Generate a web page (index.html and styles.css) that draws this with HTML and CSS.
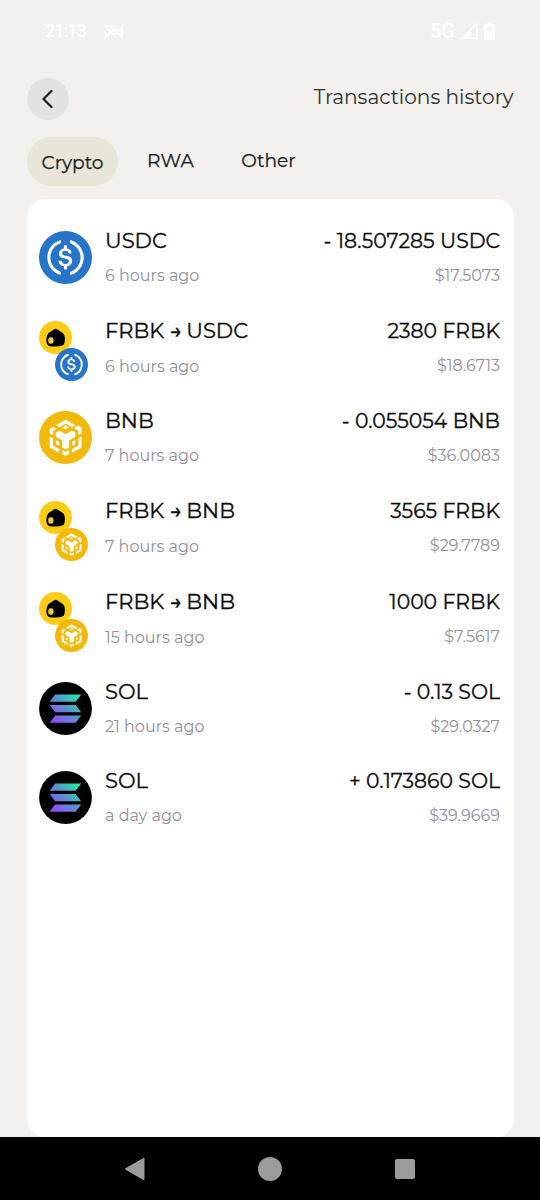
FILE: index.html
```html
<!DOCTYPE html>
<html lang="en">
<head>
<meta charset="utf-8">
<title>Transactions history</title>
<link rel="stylesheet" href="styles.css">
</head>
<body>
<svg width="0" height="0" class="defs" aria-hidden="true">
  <defs>
    <linearGradient id="sol-grad" gradientUnits="userSpaceOnUse" x1="13" y1="40" x2="40" y2="12">
      <stop offset="0" stop-color="#9945ff"/><stop offset=".5" stop-color="#5a8fd0"/><stop offset="1" stop-color="#19f5a0"/>
    </linearGradient>
    <symbol id="usdc" viewBox="0 0 32 32">
      <circle cx="16" cy="16" r="16" fill="#2775ca"/>
      <path fill="#fff" d="M20.022 18.124c0-2.124-1.28-2.852-3.84-3.156-1.828-.243-2.193-.728-2.193-1.578 0-.85.61-1.396 1.828-1.396 1.097 0 1.707.364 2.011 1.275a.458.458 0 00.427.303h.975a.416.416 0 00.427-.425v-.06a3.04 3.04 0 00-2.743-2.489V9.142c0-.243-.183-.425-.487-.486h-.915c-.243 0-.426.182-.487.486v1.396c-1.829.242-2.986 1.456-2.986 2.974 0 2.002 1.218 2.791 3.778 3.095 1.707.303 2.255.668 2.255 1.639 0 .97-.853 1.638-2.011 1.638-1.585 0-2.133-.667-2.316-1.578-.06-.242-.244-.364-.427-.364h-1.036a.416.416 0 00-.426.425v.06c.243 1.518 1.219 2.61 3.23 2.914v1.457c0 .242.183.425.487.485h.915c.243 0 .426-.182.487-.485V21.34c1.829-.303 3.047-1.578 3.047-3.217z"/>
      <path fill="#fff" d="M12.892 24.497c-4.754-1.7-7.192-6.98-5.424-11.653.914-2.55 2.925-4.491 5.424-5.402.244-.121.365-.303.365-.607v-.85c0-.242-.121-.424-.365-.485-.061 0-.183 0-.244.06a10.895 10.895 0 00-7.13 13.717c1.096 3.4 3.717 6.01 7.13 7.102.244.121.488 0 .548-.243.061-.06.061-.122.061-.243v-.85c0-.182-.182-.424-.365-.546zm6.46-18.936c-.244-.122-.488 0-.548.242-.061.061-.061.122-.061.243v.85c0 .243.182.485.365.607 4.754 1.7 7.192 6.98 5.424 11.653-.914 2.55-2.925 4.491-5.424 5.402-.244.121-.365.303-.365.607v.85c0 .242.121.424.365.485.061 0 .183 0 .244-.06a10.895 10.895 0 007.13-13.717c-1.096-3.46-3.778-6.07-7.13-7.162z"/>
    </symbol>
    <symbol id="bnb" viewBox="0 0 34 34">
      <circle cx="17" cy="17" r="17" fill="#f0b90b"/>
      <path fill="#fff" stroke="#f0b90b" stroke-width=".25" transform="translate(5.100 5.500)" d="M5.631 3.676 12.001 0l6.367 3.676-2.34 1.358L12 2.716 7.972 5.034l-2.34-1.358Zm12.737 4.636-2.34-1.358L12 9.272 7.972 6.954l-2.34 1.358v2.716l4.026 2.318v4.636L12 19.341l2.341-1.359v-4.636l4.027-2.318V8.312Zm0 7.352v-2.716l-2.34 1.358v2.716l2.34-1.358Zm1.663.96-4.027 2.318v2.717l6.368-3.677V10.63l-2.34 1.358v4.636Zm-2.34-10.63 2.34 1.358v2.716l2.341-1.358V5.034l-2.34-1.358-2.342 1.358Zm-8.034 13.4v2.716L12 23.468l2.341-1.358v-2.716L12 20.752l-2.343-1.358Zm-4.026-3.73 2.34 1.358v-2.716l-2.34-1.358v2.716Zm4.026-10.63L12 6.392l2.341-1.358L12 3.676 9.657 5.034Zm-5.689 2.32 2.34-1.36-2.34-1.358-2.34 1.358v2.716l2.34 1.358V7.354Zm0 4.636-2.34-1.358v7.353l6.366 3.677v-2.717l-4.026-2.318V11.99Z"/>
    </symbol>
    <symbol id="sol" viewBox="0 0 53 53">
      <circle cx="26.5" cy="26.5" r="26.4" fill="#000"/>
      <path fill="url(#sol-grad)" d="M16.200 12.500h26l-5.600 7.200h-26zM10.600 23h26l5.600 7.200h-26zM16.200 33.500h26l-5.600 7.200h-26z"/>
    </symbol>
    <symbol id="frbk" viewBox="0 0 33 33">
      <circle cx="16.500" cy="16.500" r="16.500" fill="#facc15"/>
      <path d="M15.300 8.200Q16.700 7.400 18 8.300L23.800 12.100Q25.800 13.600 25.900 17 26 22 24.500 24 20 26.200 11 25.300 7.600 24.500 7.300 19.500 7.200 14.500 9.500 12Z"/>
      <rect x="9.300" y="16.200" width="5.200" height="6.600" rx="2.300" fill="#e8d04a"/>
    </symbol>
  </defs>
</svg>

<div class="screen">
  <header class="status">
    <div class="status-group"><span class="clock">21:13</span>
      <svg class="notif" width="21" height="15" viewBox="0 0 21 15" fill="none" stroke="#fff" stroke-width="2.200"><path d="M2 2l9 9 8-8v10l-8-8-8 8V8M2 2h5l3 3"/></svg>
    </div>
    <div class="status-group right"><span>5G</span>
      <svg width="17" height="16" viewBox="0 0 17 16"><path d="M1 15L16 1v14z" fill="none" stroke="#fff" stroke-width="1.500"/><path d="M1 15l9-8.500V15z" fill="#fff"/></svg>
      <svg class="battery" width="11" height="18" viewBox="0 0 11 18"><path d="M3.500 0h4v2H11v16H0V2h3.500z" fill="#fff"/><path d="M3 5h5v4H3z" fill="#f3f0ed"/></svg>
    </div>
  </header>

  <div class="topbar">
    <button class="back" aria-label="Back"><svg width="12" height="20" viewBox="0 0 12 20"><path d="M9.500 2L1.500 10l8 8" fill="none" stroke="#17201f" stroke-width="2.200" stroke-linecap="round" stroke-linejoin="round"/></svg></button>
    <h1>Transactions history</h1>
  </div>

  <nav class="tabs">
    <a class="tab active">Crypto</a><a class="tab rwa">RWA</a><a class="tab other">Other</a>
  </nav>

  <main class="card">
    <div class="row">
      <div class="coin"><svg><use href="#usdc"/></svg></div>
      <div class="info"><div class="name">USDC</div><div class="time">6 hours ago</div></div>
      <div class="amount"><div class="name">- 18.507285 USDC</div><div class="fiat">$17.5073</div></div>
    </div>
    <div class="row">
      <div class="pair"><svg><use href="#frbk"/></svg><svg><use href="#usdc"/></svg></div>
      <div class="info swap"><div class="name">FRBK <span class="arrow">→</span> USDC</div><div class="time">6 hours ago</div></div>
      <div class="amount"><div class="name">2380 FRBK</div><div class="fiat">$18.6713</div></div>
    </div>
    <div class="row">
      <div class="coin"><svg><use href="#bnb"/></svg></div>
      <div class="info"><div class="name">BNB</div><div class="time">7 hours ago</div></div>
      <div class="amount"><div class="name">- 0.055054 BNB</div><div class="fiat">$36.0083</div></div>
    </div>
    <div class="row tall">
      <div class="pair"><svg><use href="#frbk"/></svg><svg><use href="#bnb"/></svg></div>
      <div class="info swap"><div class="name">FRBK <span class="arrow">→</span> BNB</div><div class="time">7 hours ago</div></div>
      <div class="amount"><div class="name">3565 FRBK</div><div class="fiat">$29.7789</div></div>
    </div>
    <div class="row">
      <div class="pair"><svg><use href="#frbk"/></svg><svg><use href="#bnb"/></svg></div>
      <div class="info swap"><div class="name">FRBK <span class="arrow">→</span> BNB</div><div class="time">15 hours ago</div></div>
      <div class="amount"><div class="name">1000 FRBK</div><div class="fiat">$7.5617</div></div>
    </div>
    <div class="row short">
      <div class="coin"><svg><use href="#sol"/></svg></div>
      <div class="info"><div class="name">SOL</div><div class="time">21 hours ago</div></div>
      <div class="amount"><div class="name">- 0.13 SOL</div><div class="fiat">$29.0327</div></div>
    </div>
    <div class="row">
      <div class="coin"><svg><use href="#sol"/></svg></div>
      <div class="info"><div class="name">SOL</div><div class="time">a day ago</div></div>
      <div class="amount"><div class="name">+ 0.173860 SOL</div><div class="fiat">$39.9669</div></div>
    </div>
  </main>

  <footer class="navbar">
    <svg width="22" height="24" viewBox="0 0 22 24"><path d="M2 12L19.500 2v20z" fill="#9b9b9b" stroke="#9b9b9b" stroke-width="2" stroke-linejoin="round"/></svg>
    <span class="home"></span>
    <span class="recent"></span>
  </footer>
</div>
</body>
</html>
```
FILE: styles.css
```css
* { box-sizing: border-box; }
body { margin: 0; background: #f3f0ed; font-family: Montserrat, Inter, sans-serif; color: #0c0c0e; }
svg { display: block; }
.defs { position: absolute; }
.screen { width: 540px; height: 1200px; display: flex; flex-direction: column; }
.status { height: 62px; padding: 0 45px; display: flex; justify-content: space-between; align-items: center; color: #fff; font: 500 18px/20px Roboto, sans-serif; }
.status-group { display: flex; align-items: center; gap: 17px; }
.status-group.right { gap: 6px; }
.status-group.right span { font-size: 20px; }
.clock { letter-spacing: -1px; }
.topbar { height: 75px; padding: 16px 27px 0 26.500px; display: flex; justify-content: space-between; align-items: flex-start; }
.back { width: 42px; height: 42px; border: 0; border-radius: 50%; background: #e2e2de; padding: 0; display: grid; place-items: center; }
h1 { margin: 6px -.5px 0 0; font-size: 20.100px; line-height: 27px; font-weight: 400; color: #2b3333; }
.tabs { height: 62px; padding-left: 27px; display: flex; align-items: flex-start; font-size: 18.600px; font-weight: 400; color: #17201f; -webkit-text-stroke: .25px; }
.tab { line-height: 47px; }
.tab.active { width: 91px; height: 49px; line-height: 52px; text-align: center; border-radius: 25px; background: #e9e5d9; }
.tab.rwa { margin-left: 29px; }
.tab.other { margin-left: 47.500px; }
.card { flex: 1; margin: 0 26px 0 27px; padding: 32px 14px 0 12px; background: #fefefe; border-radius: 18px; }
.row { height: 90px; display: grid; grid-template-columns: 66px 1fr auto; white-space: nowrap; }
.row.tall { height: 91px; }
.row.short { height: 89px; }
.coin svg { width: 53px; height: 53px; }
.pair { display: flex; flex-direction: column; }
.pair svg { width: 33px; height: 33px; }
.pair svg + svg { margin: -6px 0 0 16px; }
.name { font-size: 20.400px; line-height: 20px; font-weight: 400; -webkit-text-stroke: .3px; }
.info .name { font-size: 21px; }
.time, .fiat { margin-top: 15px; font-size: 16px; line-height: 19px; color: #92919b; }
.swap .name { height: 20px; }
.swap .time { margin-top: 16px; }
.amount { text-align: right; }
.arrow { display: inline-block; width: 11px; font-weight: 500; }
.navbar { height: 63px; background: #000; padding: 0 125px 0 124px; display: flex; align-items: center; justify-content: space-between; }
.home { width: 24px; height: 24px; margin-left: -1px; border-radius: 50%; background: #9b9b9b; }
.recent { width: 20px; height: 20px; border-radius: 2px; background: #9b9b9b; }
```
